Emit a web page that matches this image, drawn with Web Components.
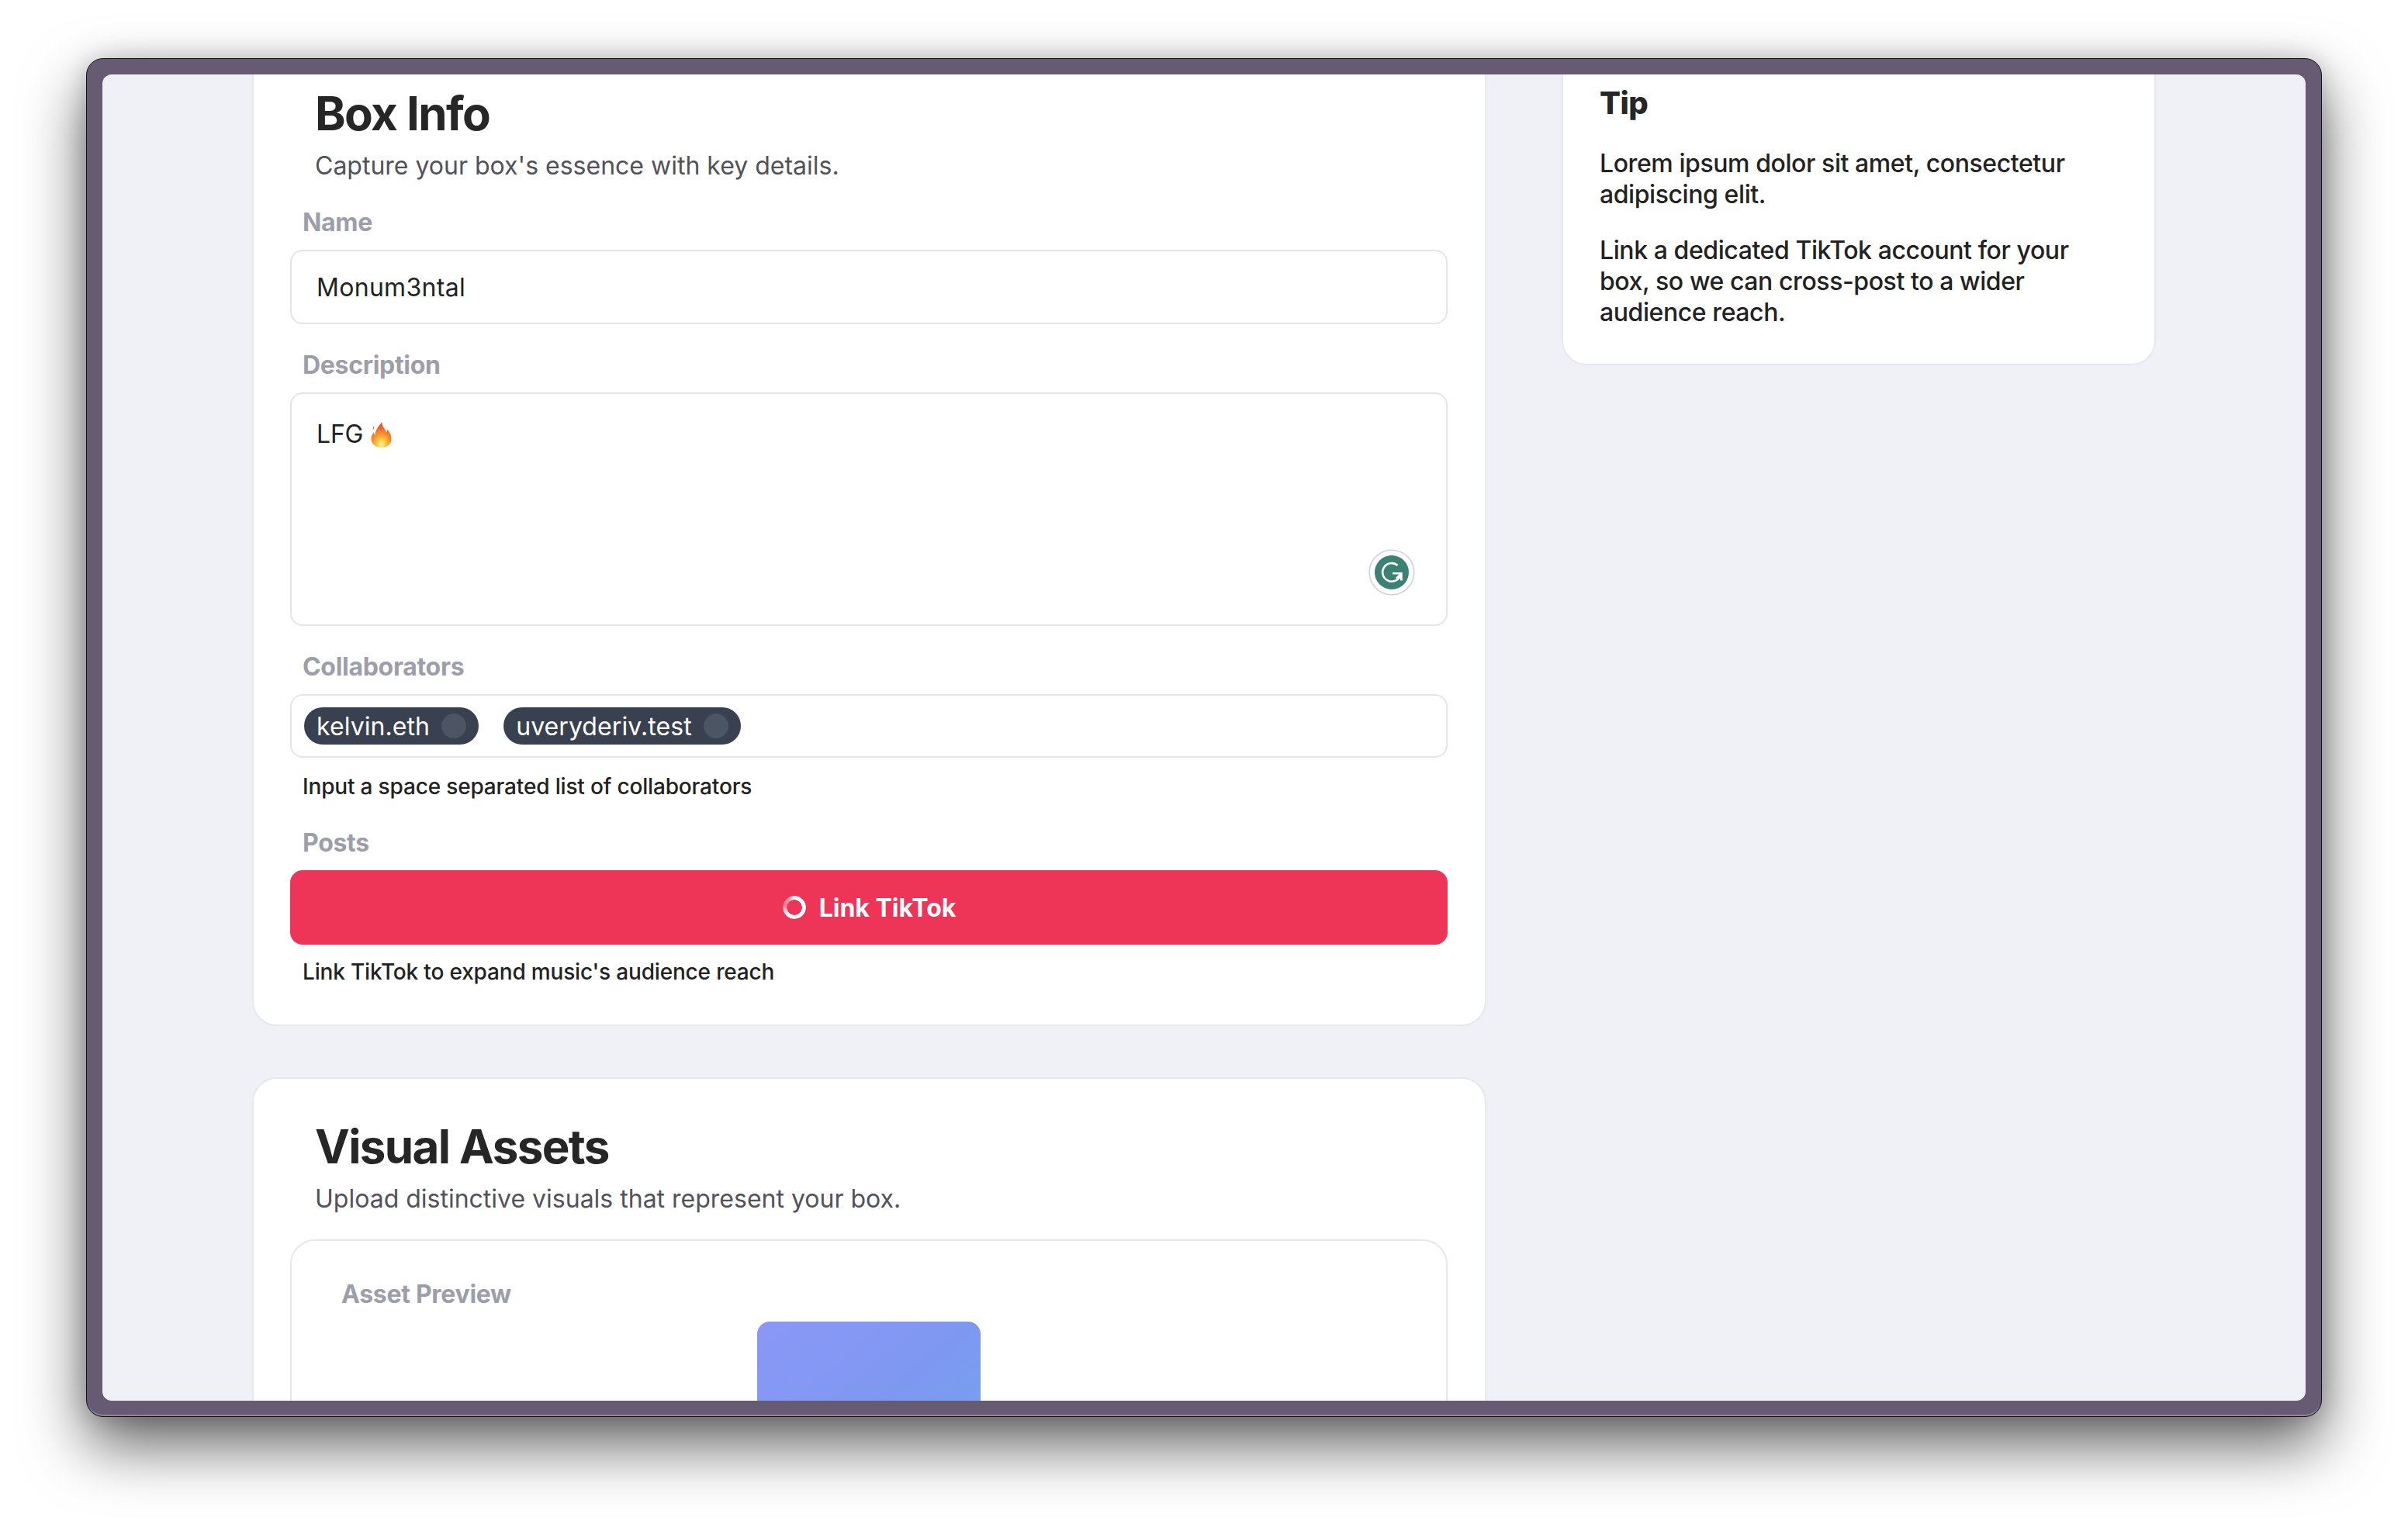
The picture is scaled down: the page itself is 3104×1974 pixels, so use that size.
<!DOCTYPE html>
<html lang="en">
<head>
<meta charset="utf-8">
<title>Box Info</title>
<style>
html,body{margin:0;padding:0;background:#fff;}
body{width:3104px;height:1974px;overflow:hidden;box-sizing:border-box;padding:75px 0 0 111px;font-family:Inter,"Liberation Sans",sans-serif;color:#222;}
</style>
</head>
<body>
<os-window>
  <app-page>
    <div>
      <form-card heading="Box Info" sub="Capture your box's essence with key details.">
        <form-field label="Name"><text-box>Monum3ntal</text-box></form-field>
        <form-field label="Description"><text-area-box>LFG <fire-emoji></fire-emoji></text-area-box></form-field>
        <form-field label="Collaborators" help="Input a space separated list of collaborators">
          <chip-box><tag-chip>kelvin.eth</tag-chip><tag-chip>uveryderiv.test</tag-chip></chip-box>
        </form-field>
        <form-field label="Posts" help="Link TikTok to expand music's audience reach"><tiktok-button>Link TikTok</tiktok-button></form-field>
      </form-card>
      <form-card class="second" heading="Visual Assets" sub="Upload distinctive visuals that represent your box.">
        <asset-preview label="Asset Preview"></asset-preview>
      </form-card>
    </div>
    <tip-card heading="Tip">
      <p>Lorem ipsum dolor sit amet, consectetur adipiscing elit.</p>
      <p>Link a dedicated TikTok account for your box, so we can cross-post to a wider audience reach.</p>
    </tip-card>
  </app-page>
</os-window>
<script>
function def(name, html, init){
  customElements.define(name, class extends HTMLElement{
    constructor(){super();const r=this.attachShadow({mode:'open'});r.innerHTML=html;}
    connectedCallback(){if(init)init(this,this.shadowRoot);}
  });
}
def('os-window',`<style>
:host{display:block;box-sizing:border-box;width:2882px;height:1752px;background:#675b74;border:1px solid #111;border-radius:22px;padding:20px;
box-shadow:0 36px 80px rgba(0,0,0,.62),0 0 30px rgba(0,0,0,.18),inset 0 -3px 0 -1px #8f8598;}
.screen{height:1710px;background:#f0f1f6;border-radius:12px;overflow:hidden;}
</style><div class="screen"><slot></slot></div>`);

def('app-page',`<style>
:host{display:grid;grid-template-columns:1591px 1fr;column-gap:97px;align-items:start;padding:0 193px;margin-top:-39px;}
</style><slot></slot>`);

def('form-card',`<style>
:host{display:block;box-sizing:border-box;background:#fff;border:2px solid #e7e8ec;border-radius:32px;padding:51px 48px 48px 47px;}
:host(.second){margin-top:66px;padding-top:50px;}
h2{margin:0 0 8px 32px;font-size:60px;line-height:72px;font-weight:700;color:#262626;letter-spacing:-1.6px;}
:host(.second) h2{margin-top:1px;}
p{margin:0 0 25px 32px;font-size:32px;line-height:48px;color:#52525b;}
:host(.second) p{margin-bottom:28px;}
</style><h2></h2><p></p><slot></slot>`,(el,r)=>{
  r.querySelector('h2').textContent=el.getAttribute('heading');
  r.querySelector('p').textContent=el.getAttribute('sub');
});

def('form-field',`<style>
:host{display:block;margin-bottom:29px;}
:host(:last-child){margin-bottom:0;}
label{display:block;margin:0 0 11px 16px;font-size:32px;line-height:48px;font-weight:700;letter-spacing:-.3px;color:#9c9ea9;}
.h{display:block;margin:17px 0 0 16px;font-size:28px;line-height:40px;color:#222;font-weight:500;letter-spacing:-.17px;}
:host(:last-child) .h{margin-top:15px;}
.h:empty{display:none}
</style><label></label><slot></slot><span class="h"></span>`,(el,r)=>{
  r.querySelector('label').textContent=el.getAttribute('label');
  r.querySelector('.h').textContent=el.getAttribute('help')||'';
});

def('text-box',`<style>
:host{display:flex;align-items:center;box-sizing:border-box;height:96px;padding:0 32px;border:2px solid #e5e6eb;border-radius:16px;font-size:32px;color:#222;letter-spacing:.3px;}
</style><slot></slot>`);

def('text-area-box',`<style>
:host{display:block;position:relative;box-sizing:border-box;height:301px;padding:28px 32px;border:2px solid #e5e6eb;border-radius:16px;font-size:32px;line-height:48px;color:#222;letter-spacing:-.2px;}
svg{position:absolute;right:40px;bottom:37px;width:60px;height:60px;}
</style><slot></slot>
<svg viewBox="0 0 60 60"><circle cx="30" cy="30" r="28.8" fill="#fff" stroke="#cfd2e2" stroke-width="1.6"/><circle cx="30" cy="30" r="22" fill="#3b8275"/>
<path d="M37.6 20.9A11.8 11.8 0 1 0 41.6 32" fill="none" stroke="#fff" stroke-width="2.6"/><path d="M31 31.3h11.4v9.2" fill="none" stroke="#fff" stroke-width="2.6"/><path d="M42 31.6l-6.2 6.2" stroke="#fff" stroke-width="2.4"/></svg>`);

def('fire-emoji',`<style>:host{display:inline-block;width:27px;height:33px;vertical-align:-6px;margin-left:1px;}svg{display:block;width:100%;height:100%;}</style>
<svg viewBox="0 0 27 33"><defs><radialGradient id="f" cx=".5" cy=".88" r=".85"><stop offset="0" stop-color="#fff7b0"/><stop offset=".22" stop-color="#ffcf3f"/><stop offset=".5" stop-color="#fb9230"/><stop offset="1" stop-color="#e83c22"/></radialGradient></defs>
<path d="M14.500 0c-.6 3.500.8 5.500 3 8.500 1.500 2 2.400 3.500 2.500 5 1-1 1.400-2.300 1.200-4 3 3 5.300 7.500 5.300 12.500 0 6.500-5.500 11-12.500 11S.5 28.500.5 22c0-3.500 1.400-6 3-8.500.3 1.500 1 2.500 2 3.200C5.800 10 10.500 5 14.500 0z" fill="url(#f)"/>
<path d="M4.300 5.500c.3 1.600-.4 3-1.700 4.600-.2-1.800.4-3.400 1.700-4.600z" fill="#ea4a26"/></svg>`);

def('chip-box',`<style>
:host{display:flex;align-items:center;gap:32px;box-sizing:border-box;height:82px;padding:0 16px;border:2px solid #e5e6eb;border-radius:16px;}
</style><slot></slot>`);

def('tag-chip',`<style>
:host{display:inline-flex;align-items:center;gap:15px;box-sizing:border-box;height:48px;padding:0 16px;border-radius:24px;background:#394151;color:#fff;font-size:32px;letter-spacing:.08px;}
i{display:block;width:32px;height:32px;border-radius:50%;background:#4b5563;}
</style><slot></slot><i></i>`);

def('tiktok-button',`<style>
:host{display:flex;align-items:center;justify-content:center;gap:16px;box-sizing:border-box;height:96px;background:#ee3457;color:#fff;border-radius:16px;font-size:32px;font-weight:700;}
i{display:block;width:30px;height:30px;margin:0 1px;border-radius:50%;background:conic-gradient(#fff 0deg,#fff 225deg,rgba(255,255,255,.35) 285deg,rgba(255,255,255,.5) 325deg,#fff 358deg);-webkit-mask:radial-gradient(circle,transparent 9.5px,#000 10px);mask:radial-gradient(circle,transparent 9.5px,#000 10px);}
</style><i></i><slot></slot>`);

def('asset-preview',`<style>
:host{display:block;box-sizing:border-box;height:640px;padding:45px 64px 0;border:2px solid #e7e8ec;border-radius:32px;}
h3{margin:0 0 11px;font-size:32px;line-height:48px;font-weight:700;letter-spacing:-.3px;color:#9c9ea9;}
.img{width:288px;height:288px;margin:0 auto;border-radius:16px;background:linear-gradient(140deg,#8b97f6 0%,#7e98f2 45%,#6ea7ea 100%);}
</style><h3></h3><div class="img"></div>`,(el,r)=>{r.querySelector('h3').textContent=el.getAttribute('label');});

def('tip-card',`<style>
:host{display:block;box-sizing:border-box;background:#fff;border:2px solid #e7e8ec;border-radius:32px;padding:50px 46px 46px 47px;font-size:32px;line-height:40px;color:#222;}
h3{margin:0 0 34px;font-size:40px;line-height:48px;font-weight:800;letter-spacing:-.6px;color:#262626;}
::slotted(p){margin:0 0 32px;font-size:32px;line-height:40px;font-weight:500;letter-spacing:-.42px;}
::slotted(p:last-child){margin-bottom:0;}
</style><h3></h3><slot></slot>`,(el,r)=>{r.querySelector('h3').textContent=el.getAttribute('heading');});
</script>
</body>
</html>
